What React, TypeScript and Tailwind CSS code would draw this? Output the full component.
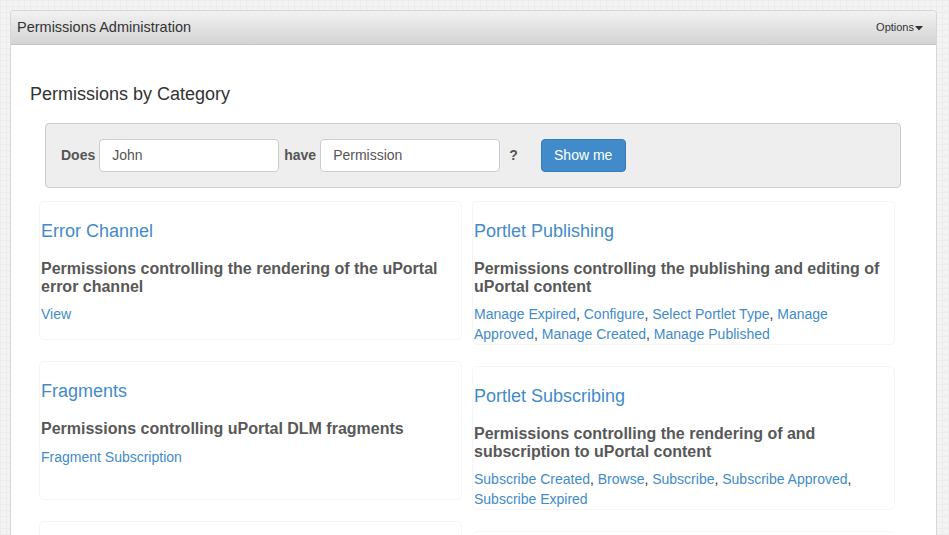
import React from 'react'

type Category = {
  title: string
  description: string
  links: string[]
}

const leftColumn: Category[] = [
  {
    title: 'Error Channel',
    description: 'Permissions controlling the rendering of the uPortal error channel',
    links: ['View'],
  },
  {
    title: 'Fragments',
    description: 'Permissions controlling uPortal DLM fragments',
    links: ['Fragment Subscription'],
  },
  {
    title: 'Groups',
    description: 'Permissions controlling groups',
    links: ['View'],
  },
]

const rightColumn: Category[] = [
  {
    title: 'Portlet Publishing',
    description: 'Permissions controlling the publishing and editing of uPortal content',
    links: ['Manage Expired', 'Configure', 'Select Portlet Type', 'Manage Approved', 'Manage Created', 'Manage Published'],
  },
  {
    title: 'Portlet Subscribing',
    description: 'Permissions controlling the rendering of and subscription to uPortal content',
    links: ['Subscribe Created', 'Browse', 'Subscribe', 'Subscribe Approved', 'Subscribe Expired'],
  },
  {
    title: 'Users',
    description: 'Permissions controlling users',
    links: ['View'],
  },
]

function CategoryCard({ category }: { category: Category }) {
  return (
    <div className="min-h-[139px] rounded-[5px] border border-[#f6f6f6] pl-[1px] pr-[8px] pt-[19px]">
      <h3 className="text-[18px] leading-[20px] text-[#428bca]">{category.title}</h3>
      <p className="mt-[19px] text-[16px] leading-[17.5px] font-bold text-[#585858]">{category.description}</p>
      <div className="mt-[9px] text-[14px] leading-[20px] text-[#333]">
        {category.links.map((link, i) => (
          <React.Fragment key={link}>
            <a className="text-[#428bca]">{link}</a>
            {i < category.links.length - 1 ? ', ' : ''}
          </React.Fragment>
        ))}
      </div>
    </div>
  )
}

export default function App() {
  return (
    <div
      className="min-h-screen bg-[#f3f3f3] bg-[linear-gradient(#ececec_1px,transparent_1px),linear-gradient(90deg,#ececec_1px,transparent_1px)] bg-[size:6px_6px] pt-[10px] pl-[10px] overflow-hidden"
      style={{ fontFamily: '"Liberation Sans", Arial, sans-serif' }}
    >
      <div className="w-[927px] rounded-t-[4px] border border-[#d6d6d6] bg-white">
        {/* Portlet header */}
        <div className="flex h-[34px] items-center justify-between rounded-t-[4px] border-b border-[#c4c4c4] bg-gradient-to-b from-[#f2f2f2] to-[#d4d4d4] pl-[6px] pr-[13px]">
          <span className="text-[14.5px] text-[#333]">Permissions Administration</span>
          <span className="flex items-center text-[11px] text-[#333]">
            Options
            <svg width="8" height="5" viewBox="0 0 8 5" className="ml-[1px] mt-[1px]">
              <path d="M0 0h8L4 4.5z" fill="#333" />
            </svg>
          </span>
        </div>

        {/* Body */}
        <div className="px-[19px] pt-[39px] pb-[40px]">
          <h2 className="text-[18px] leading-[20px] text-[#333]">Permissions by Category</h2>

          <div className="mt-[19px] ml-[15px] mr-[16px] flex items-center rounded-[4px] border border-[#ccc] bg-[#eee] py-[15px] pl-[15px]">
            <span className="text-[14px] font-bold text-[#555]">Does</span>
            <div className="ml-[4px] flex h-[33px] w-[180px] items-center rounded-[4px] border border-[#ccc] bg-white px-[12px] text-[14px] text-[#555]">
              John
            </div>
            <span className="ml-[5px] text-[14px] font-bold text-[#555]">have</span>
            <div className="ml-[4px] flex h-[33px] w-[180px] items-center rounded-[4px] border border-[#ccc] bg-white px-[12px] text-[14px] text-[#555]">
              Permission
            </div>
            <span className="ml-[9px] text-[14px] font-bold text-[#555]">?</span>
            <button className="ml-[23px] h-[33px] w-[85px] rounded-[4px] border border-[#357ebd] bg-[#428bca] text-[14px] text-white">
              Show me
            </button>
          </div>

          <div className="mt-[13px] ml-[9px] grid grid-cols-[423px_423px] gap-x-[10px]">
            <div className="flex flex-col gap-[21px]">
              {leftColumn.map((c) => (
                <CategoryCard key={c.title} category={c} />
              ))}
            </div>
            <div className="flex flex-col gap-[21px]">
              {rightColumn.map((c) => (
                <CategoryCard key={c.title} category={c} />
              ))}
            </div>
          </div>
        </div>
      </div>
    </div>
  )
}
